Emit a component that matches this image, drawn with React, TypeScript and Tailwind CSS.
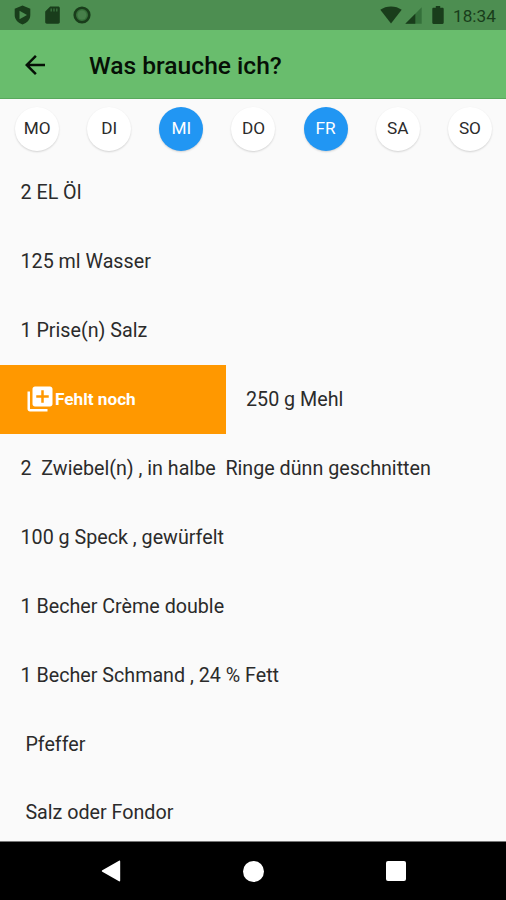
import React from "react";

const days = [
  { label: "MO", active: false },
  { label: "DI", active: false },
  { label: "MI", active: true },
  { label: "DO", active: false },
  { label: "FR", active: true },
  { label: "SA", active: false },
  { label: "SO", active: false },
];

const before = ["2 EL Öl", "125 ml Wasser", "1 Prise(n) Salz"];
const after = [
  "2  Zwiebel(n) , in halbe  Ringe dünn geschnitten",
  "100 g Speck , gewürfelt",
  "1 Becher Crème double",
  "1 Becher Schmand , 24 % Fett",
  " Pfeffer",
  " Salz oder Fondor",
];

function StatusBar() {
  return (
    <div className="flex h-[30px] shrink-0 items-center bg-[#4d8e51] pr-[9px] pl-[14px] text-[#193d1b]">
      <svg className="h-[20px] w-[17px]" viewBox="0 0 17 20">
        <path fill="currentColor" d="M8.5.5 16.3 3.8V10c0 4.5-3.300 8-7.800 9.500C4 18 .7 14.500.7 10V3.800z" />
        <path fill="#4d8e51" d="M5.500 5.800 13 10.100 5.500 14.200z" />
      </svg>
      <svg className="ml-[14px] h-[18px] w-[15px]" viewBox="0 0 15 18">
        <path fill="currentColor" d="M5.200.500h8c.900 0 1.600.700 1.600 1.600v14c0 .900-.700 1.600-1.600 1.600H1.800c-.900 0-1.600-.700-1.600-1.600V5.500z" />
        <path stroke="#3c7540" strokeWidth="1.300" d="M6.200 2.500v3M9 2.500v3M11.800 2.500v3" />
      </svg>
      <svg className="ml-[13px] h-[18px] w-[18px]" viewBox="0 0 18 18">
        <circle cx="9" cy="9" r="7.300" fill="#36703a" stroke="currentColor" strokeWidth="2.600" />
        <circle cx="9" cy="9" r="4.500" fill="#477f4a" />
      </svg>
      <svg className="ml-auto h-[18px] w-[22px]" viewBox="0 0 22 18">
        <path fill="currentColor" d="M.3 3.800C3.300 1.600 7 .400 11 .400s7.700 1.200 10.700 3.400L11 17.600z" />
      </svg>
      <svg className="ml-[3px] h-[17px] w-[17px]" viewBox="0 0 17 17">
        <path fill="#34703a" d="M16.700.300v16.400H.300z" />
        <path fill="currentColor" d="M10.300 6.700v10H.300z" />
      </svg>
      <svg className="ml-[10px] h-[18px] w-[12px]" viewBox="0 0 12 18">
        <path fill="currentColor" d="M3.800 0h4.400v1.800h2.300c.700 0 1.200.500 1.200 1.200v13.800c0 .700-.500 1.200-1.200 1.200h-9C.8 18 .3 17.500.3 16.800V3c0-.700.500-1.200 1.200-1.200h2.300z" />
      </svg>
      <span className="ml-[9px] w-[44px] pt-[3px] text-[17.2px] leading-none whitespace-nowrap">18:34</span>
    </div>
  );
}

function Row({ text }: { text: string }) {
  return (
    <li className="flex h-[68.9px] items-center pt-[1.5px] pl-[20.500px] text-[19.7px] whitespace-pre">{text}</li>
  );
}

export default function App() {
  return (
    <div className="flex h-[900px] w-[506px] flex-col overflow-hidden bg-[#fafafa] font-[Roboto,sans-serif] text-[#2b2b2b]">
      <StatusBar />
      <header className="flex h-[69px] shrink-0 items-center border-b border-[#58a95c] bg-[#69bd6d] pt-px pl-[20px] text-[#061006]">
        <svg className="h-[30px] w-[30px]" viewBox="0 0 24 24">
          <path fill="currentColor" d="M20 11H7.830l5.590-5.590L12 4l-8 8 8 8 1.410-1.410L7.830 13H20v-2z" />
        </svg>
        <h1 className="ml-[39px] pt-[3px] text-[24.6px] leading-none font-medium">Was brauche ich?</h1>
      </header>
      <div className="grid h-[59px] shrink-0 grid-cols-7 items-center justify-items-center pl-px">
        {days.map((d) => (
          <button
            key={d.label}
            className={
              "flex h-[44px] w-[44px] items-center justify-center rounded-full text-[17.200px] leading-none shadow-[0_1px_2px_rgba(0,0,0,0.16)] " +
              (d.active ? "bg-[#2196f3] text-white" : "bg-white")
            }
          >
            {d.label}
          </button>
        ))}
      </div>
      <ul className="min-h-0 flex-1 overflow-hidden">
        {before.map((t) => (
          <Row key={t} text={t} />
        ))}
        <li className="flex h-[68.9px] items-center text-[19.7px]">
          <div className="flex h-full w-[226px] items-center bg-[#ff9800] pl-[25px] text-white">
            <svg className="h-[30px] w-[30px]" viewBox="0 0 24 24">
              <path fill="currentColor" d="M4 6H2v14c0 1.100.900 2 2 2h14v-2H4V6zm16-4H8c-1.100 0-2 .900-2 2v12c0 1.100.900 2 2 2h12c1.100 0 2-.900 2-2V4c0-1.100-.900-2-2-2zm-1 9h-4v4h-2v-4H9V9h4V5h2v4h4v2z" />
            </svg>
            <span className="text-[17.200px] leading-none font-bold">Fehlt noch</span>
          </div>
          <span className="ml-[20px] pt-[1.5px]">250 g Mehl</span>
        </li>
        {after.map((t) => (
          <Row key={t} text={t} />
        ))}
      </ul>
      <nav className="flex h-[59px] shrink-0 items-center border-t border-[#777] bg-black pl-[101px] text-white">
        <svg className="h-[22px] w-[20px]" viewBox="0 0 20 22">
          <path fill="currentColor" d="M18 .700c.700-.400 1.200 0 1.200.800v19c0 .800-.500 1.200-1.200.800L1.300 11.800c-.600-.400-.600-1.200 0-1.600z" />
        </svg>
        <div className="ml-[122px] h-[21px] w-[21px] rounded-full bg-white" />
        <div className="ml-[122px] h-[20px] w-[20px] rounded-[2px] bg-white" />
      </nav>
    </div>
  );
}
